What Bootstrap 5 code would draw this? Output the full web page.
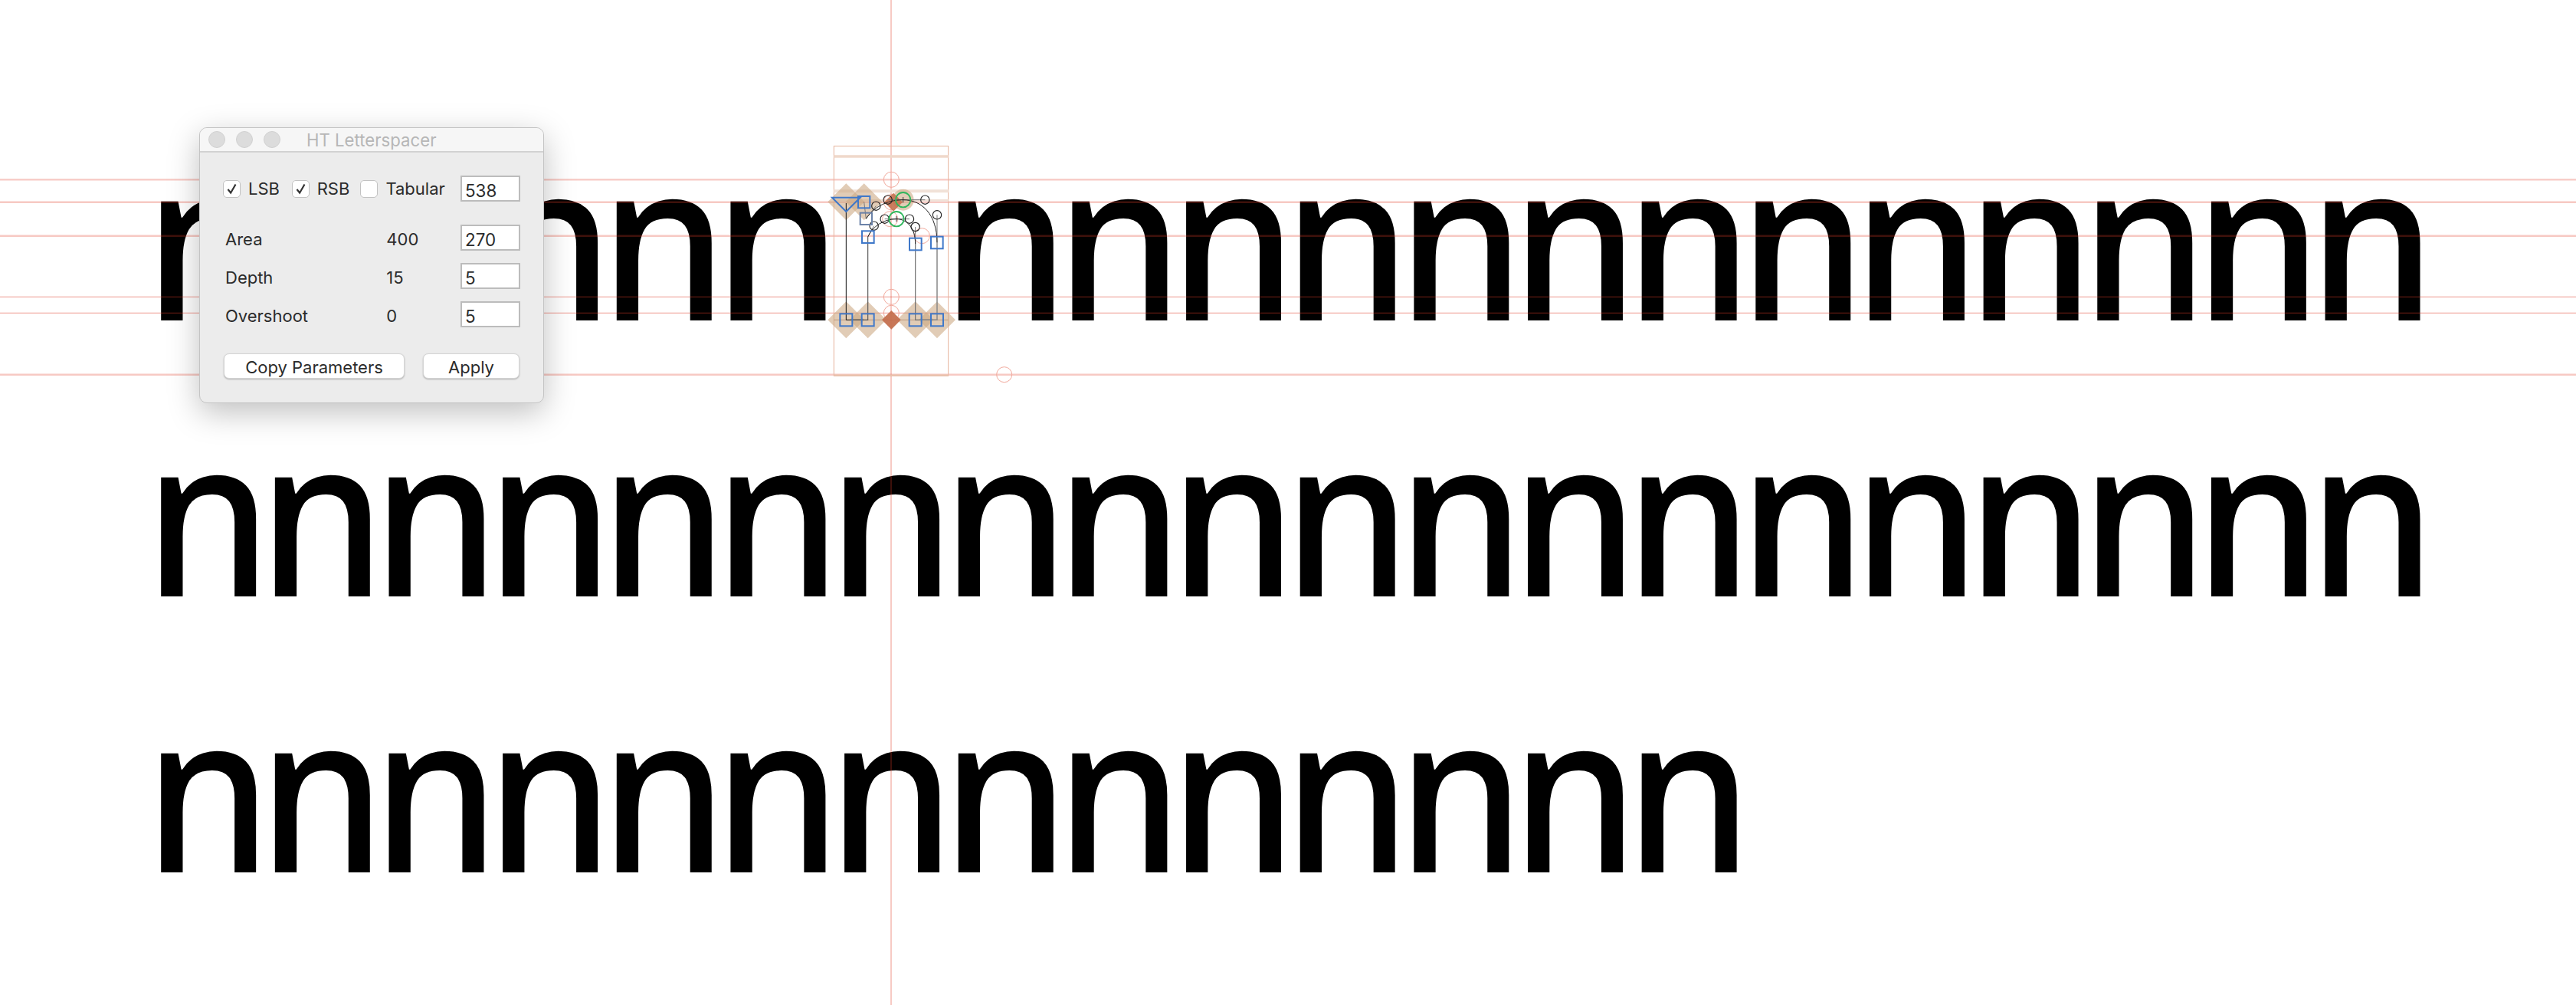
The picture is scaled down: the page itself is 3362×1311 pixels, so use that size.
<!doctype html>
<html><head><meta charset="utf-8">
<link href="https://cdn.jsdelivr.net/npm/bootstrap@5.3.0/dist/css/bootstrap.min.css" rel="stylesheet">
<style>
html{overflow:hidden}
body{background:#fff;margin:0;overflow:hidden;width:3362px;height:1311px;position:relative}
.sheet{padding-top:126px}
.ln{white-space:nowrap;line-height:360px;color:#000;margin:0;height:360px;font-family:"Noto Sans",sans-serif;font-size:288px;font-weight:500;letter-spacing:-19px;padding-left:205px;transform-origin:0 0;transform:scaleX(.92)}
.overlay{position:absolute;left:0;top:0;pointer-events:none}
.win{position:absolute;left:260px;top:166px;width:450px;height:360px;background:#ececec;border:1px solid #c4c4c4;border-radius:10px;box-shadow:0 12px 40px rgba(0,0,0,.25);font-family:Inter,sans-serif;font-size:22px;color:#2b2b2b;overflow:hidden}
.wbar{height:32px;background:#f6f6f6;border-bottom:2px solid #d2d2d2;padding-left:11px;position:relative;gap:14px}
.dot{width:22px;height:22px;border-radius:50%;background:#dcdcdc;border:1px solid #d0d0d0}
.wtitle{position:absolute;left:139px;top:0;line-height:31px;font-size:22.2px;color:#b6b6b6}
.wbody{padding:30px 30px 0 30px}
.chk{width:90px}
.chk .form-check-input{width:23px;height:23px;margin:0 10px 0 0;border:1px solid #c2c2c2;border-radius:5px;background-color:#fff;box-shadow:none;flex:none}
.chk .form-check-input:checked{background-color:#fff;border-color:#c2c2c2;background-image:url("data:image/svg+xml,%3csvg xmlns='http://www.w3.org/2000/svg' viewBox='0 0 23 23'%3e%3cpath fill='none' stroke='%23333' stroke-width='2.4' d='M6 12l4 5 7-12'/%3e%3c/svg%3e");background-size:100% 100%}
.chk3{width:131px}
.winp{width:78px;height:34px;border:2px solid #bcbcbc;border-radius:0;padding:4px 4px 0;font-size:22.4px;line-height:1;color:#2b2b2b;background:#fff;font-family:Inter,sans-serif;box-shadow:none}
.prow{padding-left:3px;margin-top:16px}
.prow1{margin-top:30px}
.pname,.pval{line-height:1;padding-top:4px}
.pname{width:211px}
.pval{width:97px}
.btnrow{margin-top:34px;gap:24px;padding-left:1px}
.wbtn{height:33px;padding:2px 0 0;background:#fff;border:1px solid #d4d4d4;border-radius:7px;box-shadow:0 1px 2px rgba(0,0,0,.25);font-size:22px;line-height:1;color:#2b2b2b}
.wb1{width:236px}.wb2{width:126px}
.gl{stroke:#e13c28;stroke-opacity:.42;stroke-width:1.3;fill:none}
.gh{stroke:#e13c28;stroke-opacity:.28;stroke-width:2.4;fill:none}
.vl{stroke:#e13c28;stroke-opacity:.3;stroke-width:1.8}
</style></head><body>
<div class="sheet">
<p class="ln">nnnnnn<span class="invisible">n</span>nnnnnnnnnnnnn</p>
<p class="ln">nnnnnnnnnnnnnnnnnnnn</p>
<p class="ln">nnnnnnnnnnnnnn</p>
</div>
<svg class="overlay" width="3362" height="1311" viewBox="0 0 3362 1311">
<path class="gh" d="M0 234.4H3362M0 263.7H3362M0 307.7H3362M0 488.7H3362"/>
<path class="gl" d="M0 387.3H3362M0 408.3H3362"/>
<path class="vl" d="M1163 0V1311"/>
<g transform="translate(1060 170) scale(.33333)">
<rect x="85" y="62" width="448" height="899" fill="none" stroke="#e6b39c" stroke-width="3"/>
<path d="M85 102H533" stroke="#efd8ca" stroke-width="10"/>
<path d="M85 238H533" stroke="#f1e2d8" stroke-width="12"/>
<path d="M85 274H533" stroke="#f1e2d8" stroke-width="8"/>
<path d="M85 958H533" stroke="#e9c4ae" stroke-width="5"/>
<g fill="#cba781" fill-opacity=".58">
<path d="M133 208l72 72-72 72-72-72z"/><path d="M203 208l72 72-72 72-72-72z"/>
<path d="M133 670l72 72-72 72-72-72z"/><path d="M218 670l72 72-72 72-72-72z"/>
<path d="M404 670l72 72-72 72-72-72z"/><path d="M489 670l72 72-72 72-72-72z"/>
<circle cx="356" cy="272" r="42"/>
</g>
<path d="M85 742H533" stroke="#b58f75" stroke-width="2.5"/>
<g fill="none" stroke="#f0a79a" stroke-width="3">
<circle cx="310" cy="193" r="30"/><circle cx="310" cy="652" r="30"/><circle cx="310" cy="715" r="30"/>
<circle cx="310" cy="281" r="30"/><circle cx="305" cy="347" r="30"/><circle cx="430" cy="413" r="30"/><circle cx="752" cy="956" r="30"/>
</g>
<path d="M318 245l36 36-36 36-36-36z" fill="#c4704f" fill-opacity=".9"/>
<path d="M310 705l37 37-37 37-37-37z" fill="#c4704f" fill-opacity=".95"/>
<path d="M133 285V742H200" fill="none" stroke="#111" stroke-width="3"/>
<path d="M218 417V742H150" fill="none" stroke="#555" stroke-width="3.5"/>
<path d="M404 445V742H470" fill="none" stroke="#6e6e6e" stroke-width="3.5"/>
<path d="M489 439V742H420" fill="none" stroke="#888" stroke-width="4.5"/>
<g fill="none" stroke="#777" stroke-width="3">
<path d="M203 280L211 346L250 296M218 417L242 374M284 347H381M296 272H442M489 439V331M404 445V378"/>
</g>
<path d="M330 335V358M356 261V283" stroke="#333" stroke-width="3"/>
<g fill="none" stroke="#222" stroke-width="3">
<path d="M356 272C430 272 489 330 489 439"/>
<path d="M330 347C370 347 404 380 404 445"/>
<path d="M218 417C236 376 280 347 330 347"/>
<path d="M211 346C236 305 290 272 356 272"/>
</g>
<g fill="none" stroke="#222" stroke-width="3.5">
<circle cx="296" cy="272" r="17"/><circle cx="250" cy="296" r="17"/><circle cx="242" cy="374" r="17"/><circle cx="284" cy="347" r="17"/><circle cx="381" cy="347" r="17"/><circle cx="404" cy="378" r="17"/><circle cx="442" cy="272" r="17"/><circle cx="489" cy="331" r="17"/>
</g>
<g fill="none" stroke="#2fb65c" stroke-width="5.5"><circle cx="356" cy="272" r="29"/><circle cx="330" cy="347" r="29"/></g>
<g fill="none" stroke="#3f78c9" stroke-width="6">
<path d="M78 263H188L133 318Z"/>
<rect x="180" y="258" width="46" height="46"/><rect x="188" y="323" width="46" height="46" stroke="#6b82a8"/><rect x="195" y="394" width="47" height="47"/><rect x="381" y="422" width="47" height="47"/><rect x="465" y="416" width="47" height="47"/>
<rect x="109" y="718" width="48" height="48"/><rect x="194" y="718" width="48" height="48"/><rect x="380" y="718" width="48" height="48"/><rect x="465" y="718" width="48" height="48"/>
</g>
</g>
</svg>
<div class="win">
<div class="wbar d-flex align-items-center"><span class="dot"></span><span class="dot"></span><span class="dot"></span><span class="wtitle">HT Letterspacer</span></div>
<div class="wbody">
<div class="d-flex align-items-center">
<label class="chk d-flex align-items-center"><input class="form-check-input" type="checkbox" checked>LSB</label>
<label class="chk d-flex align-items-center"><input class="form-check-input" type="checkbox" checked>RSB</label>
<label class="chk chk3 d-flex align-items-center"><input class="form-check-input" type="checkbox">Tabular</label>
<input class="form-control winp" value="538">
</div>
<div class="d-flex align-items-center prow prow1"><span class="pname">Area</span><span class="pval">400</span><input class="form-control winp" value="270"></div>
<div class="d-flex align-items-center prow"><span class="pname">Depth</span><span class="pval">15</span><input class="form-control winp" value="5"></div>
<div class="d-flex align-items-center prow"><span class="pname">Overshoot</span><span class="pval">0</span><input class="form-control winp" value="5"></div>
<div class="d-flex btnrow"><button class="btn wbtn wb1" type="button">Copy Parameters</button><button class="btn wbtn wb2" type="button">Apply</button></div>
</div>
</div>
<script src="https://cdn.jsdelivr.net/npm/bootstrap@5.3.0/dist/js/bootstrap.bundle.min.js"></script>
</body></html>
